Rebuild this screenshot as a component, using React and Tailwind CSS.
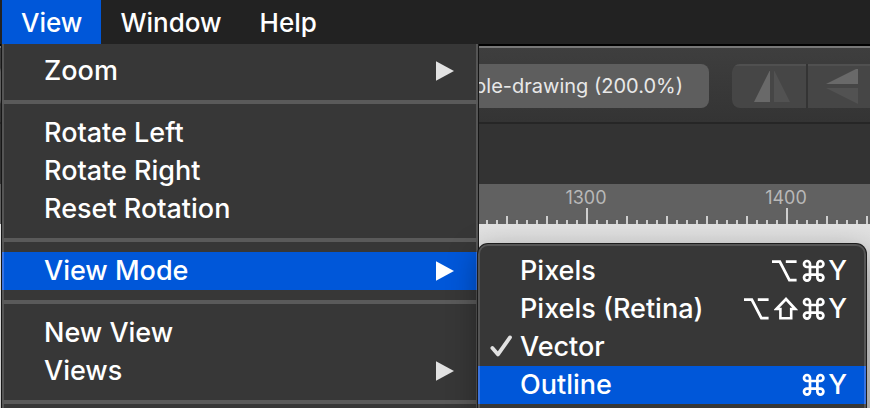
import React from "react";

const menuBar = [
  { label: "View", open: true },
  { label: "Window" },
  { label: "Help" },
];

const viewMenu = [
  [{ label: "Zoom", sub: true }],
  [{ label: "Rotate Left" }, { label: "Rotate Right" }, { label: "Reset Rotation" }],
  [{ label: "View Mode", sub: true, modes: true }],
  [{ label: "New View" }, { label: "Views", sub: true }],
  [],
];

const modes = [
  { label: "Pixels", keys: ["option", "command"] },
  { label: "Pixels (Retina)", keys: ["option", "shift", "command"] },
  { label: "Vector", checked: true, keys: null },
  { label: "Outline", active: true, keys: ["command"] },
];

function Arrow({ bright }) {
  return (
    <svg width="18" height="20" viewBox="0 0 18 20" className={bright ? "text-white" : "text-[#e2e2e2]"} aria-hidden="true">
      <path d="M0 0.3 L18 10 L0 19.7Z" fill="currentColor" />
    </svg>
  );
}

function Key({ name }) {
  if (name === "option")
    return (
      <svg width="26" height="24" viewBox="0 0 26 24" fill="none" stroke="currentColor" strokeWidth="2.8" aria-label="Option">
        <path d="M0 2.6H7.8L17.4 21.2H24.6M13.8 2.6H24.6" />
      </svg>
    );
  if (name === "shift")
    return (
      <svg width="24" height="24" viewBox="0 0 24 24" fill="none" stroke="currentColor" strokeWidth="2.6" aria-label="Shift">
        <path d="M12 2L21.2 12H17.2V21.3H6.4V12H2.4Z" />
      </svg>
    );
  return (
    <svg width="24" height="24" viewBox="0 0 24 24" fill="none" stroke="currentColor" strokeWidth="2.7" aria-label="Command">
      <path d="M8 8V5A3 3 0 1 0 5 8H18.4A3 3 0 1 0 15.4 5V18.6A3 3 0 1 0 18.4 15.6H5A3 3 0 1 0 8 18.6Z" />
    </svg>
  );
}

function Submenu() {
  return (
    <div
      role="menu"
      className="absolute -top-2 left-full z-10 w-[388px] rounded-t-[10px] border-2 border-b-0 border-[#555] bg-[#373737] pt-1.5 pb-4 shadow-[0_0_0_1px_#1c1c1c,0_8px_30px_rgba(0,0,0,0.35)]"
    >
      {modes.map((m) => (
        <button
          key={m.label}
          role="menuitem"
          className={
            "-mx-0.5 flex h-[38px] w-[388px] items-center border-x-2 pr-[17px] text-left " +
            (m.active ? "border-[#3b74e0] bg-[#0057d9]" : "border-transparent")
          }
        >
          <span className="flex w-10 justify-center pl-1">
            {m.checked && (
              <svg width="24" height="24" viewBox="0 0 24 24" fill="none" stroke="#e2e2e2" strokeWidth="3.8" strokeLinecap="round" strokeLinejoin="round" aria-hidden="true">
                <path d="M2.4 13L8 19.4L20 2.4" />
              </svg>
            )}
          </span>
          <span className="grow">{m.label}</span>
          {m.keys && (
            <span className="flex items-center gap-0.5">
              <span className="flex items-center gap-1">
                {m.keys.map((k) => (
                  <Key key={k} name={k} />
                ))}
              </span>
              <span>Y</span>
            </span>
          )}
        </button>
      ))}
    </div>
  );
}

function ViewMenu() {
  return (
    <div
      role="menu"
      className="absolute top-11 left-0.5 z-10 w-[476px] border-x-2 border-[#555] bg-[#373737] pt-2 pb-20 shadow-[0_0_0_1px_#161616]"
    >
      {viewMenu.map((group, i) => (
        <React.Fragment key={i}>
          {i > 0 && <div role="separator" className="-mx-0.5 my-2.5 h-1 bg-[#5a5a5a]" />}
          {group.map((item) => (
            <div key={item.label} className="relative -mx-0.5">
              <button
                role="menuitem"
                className={
                  "flex h-[38px] w-full items-center justify-between border-x-2 pr-[22px] pl-10 text-left " +
                  (item.modes ? "border-[#3b74e0] bg-[#0057d9]" : "border-transparent")
                }
              >
                <span>{item.label}</span>
                {item.sub && <Arrow bright={item.modes} />}
              </button>
              {item.modes && <Submenu />}
            </div>
          ))}
        </React.Fragment>
      ))}
    </div>
  );
}

function Toolbar() {
  return (
    <div className="flex h-[78px] shrink-0 items-start border-t-2 border-b-2 border-t-[#777] border-b-[#262626] bg-linear-to-b from-[#3e3e3e] to-[#343434] pt-4">
      <div className="flex h-11 w-[709px] shrink-0 items-center justify-end rounded-lg bg-[#5e5e5e] pr-[26px] text-[20px] text-[#e8e8e8]">
        example-drawing (200.0%)
      </div>
      <div className="ml-[23px] flex h-11 grow gap-0.5 overflow-hidden rounded-l-lg bg-[#343434]">
        <button aria-label="Flip horizontal" className="flex w-[74px] shrink-0 items-center border-t-2 border-[#505050] bg-[#464646] pl-[22px]">
          <svg width="36" height="32" viewBox="0 0 36 32" className="shrink-0" aria-hidden="true">
            <path d="M0 31L16 -1V31Z" fill="#696969" />
            <path d="M20 -1L36 31H20Z" fill="#525252" />
          </svg>
        </button>
        <button aria-label="Flip vertical" className="flex grow items-center border-t-2 border-[#505050] bg-[#464646] pl-[18px]">
          <svg width="32" height="36" viewBox="0 1 32 36" className="shrink-0" aria-hidden="true">
            <path d="M0 16L32 0V16Z" fill="#696969" />
            <path d="M0 20H32V36Z" fill="#525252" />
          </svg>
        </button>
      </div>
    </div>
  );
}

const ticks = Array.from({ length: 20 }, (_, i) => i * 10);

function Ruler() {
  return (
    <div className="flex h-10 shrink-0 overflow-hidden bg-[#616161] pl-[486px]">
      {["1300", "1400", "", ""].map((n, i) => (
        <div key={i} className="flex w-[200px] shrink-0 flex-col items-center pt-1 text-[18px] leading-5 text-[#b8b8b8]">
          <span className="h-5">{n}</span>
          <svg width="200" height="16" viewBox="0 0 200 16" fill="#cfcfcf" aria-hidden="true">
            {ticks.map((x) => {
              const h = x === 100 ? 16 : x % 40 === 20 ? 8 : 4;
              return <rect key={x} x={x} y={16 - h} width="2" height={h} />;
            })}
          </svg>
        </div>
      ))}
    </div>
  );
}

export default function App() {
  return (
    <div className="relative flex h-screen flex-col overflow-hidden bg-[#dedede] font-['Inter','Liberation_Sans',sans-serif]">
      <nav className="relative z-20 flex h-11 shrink-0 bg-[#222] pl-0.5 text-[26px] font-medium text-white">
        {menuBar.map((m) => (
          <button key={m.label} className={"px-[19px] " + (m.open ? "bg-[#0057d9]" : "")}>
            {m.label}
          </button>
        ))}
      </nav>
      <div className="h-0.5 shrink-0 bg-black" />
      <Toolbar />
      <div className="h-[60px] shrink-0 bg-[#333]" />
      <Ruler />
      <div className="grow bg-linear-to-b from-[#e2e2e2] to-[#c8c8c8]" />
      <div className="text-[27px] leading-8 font-medium text-white">
        <ViewMenu />
      </div>
    </div>
  );
}
